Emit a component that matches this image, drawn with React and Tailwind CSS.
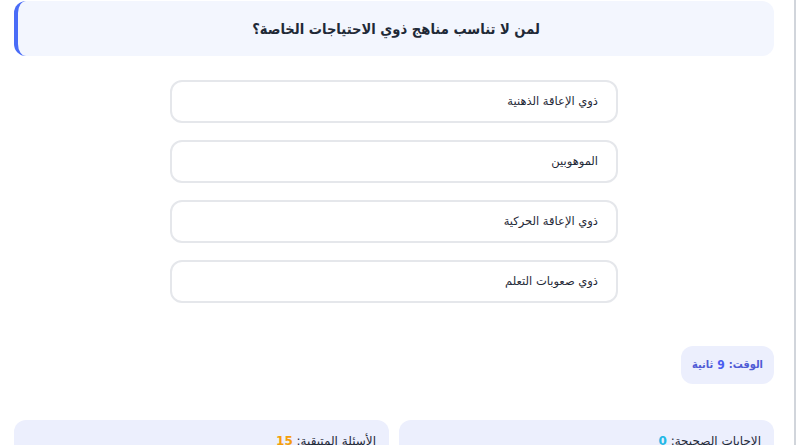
export default function App() {
  const options = [
    "ذوي الإعاقة الذهنية",
    "الموهوبين",
    "ذوي الإعاقة الحركية",
    "ذوي صعوبات التعلم",
  ];
  return (
    <div
      className="w-[796px] h-[445px] overflow-hidden bg-white flex"
      style={{ fontFamily: '"DejaVu Sans", sans-serif' }}
    >
      <div dir="rtl" className="flex-1 pt-[1px] pl-[14px] pr-[20px]">
        <div className="h-[55px] bg-[#f3f6fe] rounded-xl border-l-4 border-[#4a6cf7] flex items-center justify-center">
          <h1
            className="text-[14.6px] font-bold text-[#1f2937]"
            style={{ fontFamily: '"DejaVu Sans Condensed", "DejaVu Sans", sans-serif' }}
          >
            لمن لا تناسب مناهج ذوي الاحتياجات الخاصة؟
          </h1>
        </div>
        <div className="mt-[24px] flex flex-col items-center gap-[17px]">
          {options.map((o) => (
            <div
              key={o}
              className="w-[448px] h-[43px] border-2 border-[#e5e7eb] rounded-xl flex items-center px-[18px] text-[11.5px] text-[#1f2937] bg-white"
            >
              {o}
            </div>
          ))}
        </div>
        <div className="mt-[43px] flex justify-start">
          <div
            className="h-[38px] px-[11px] rounded-xl bg-[#eceffd] flex items-center text-[11px] font-bold text-[#4f5bd5]"
            style={{ fontFamily: '"DejaVu Sans Condensed", "DejaVu Sans", sans-serif' }}
          >
            الوقت: <span className="mx-[4px] text-[12px] text-[#4a5cf0]">9</span> ثانية
          </div>
        </div>
        <div className="mt-[36px] grid grid-cols-2 gap-[10px]">
          <div className="h-[60px] rounded-xl bg-[#eceffd] pt-[12px] px-[13px] text-[12px] text-[#1f2937]">
            الإجابات الصحيحة: <span className="font-bold text-[#22b8e6]">0</span>
          </div>
          <div className="h-[60px] rounded-xl bg-[#eceffd] pt-[12px] px-[13px] text-[12px] text-[#1f2937]">
            الأسئلة المتبقية: <span className="font-bold text-[#f59e0b]">15</span>
          </div>
        </div>
      </div>
      <div className="w-[2px] h-full bg-[#d1d5db]"></div>
    </div>
  );
}
